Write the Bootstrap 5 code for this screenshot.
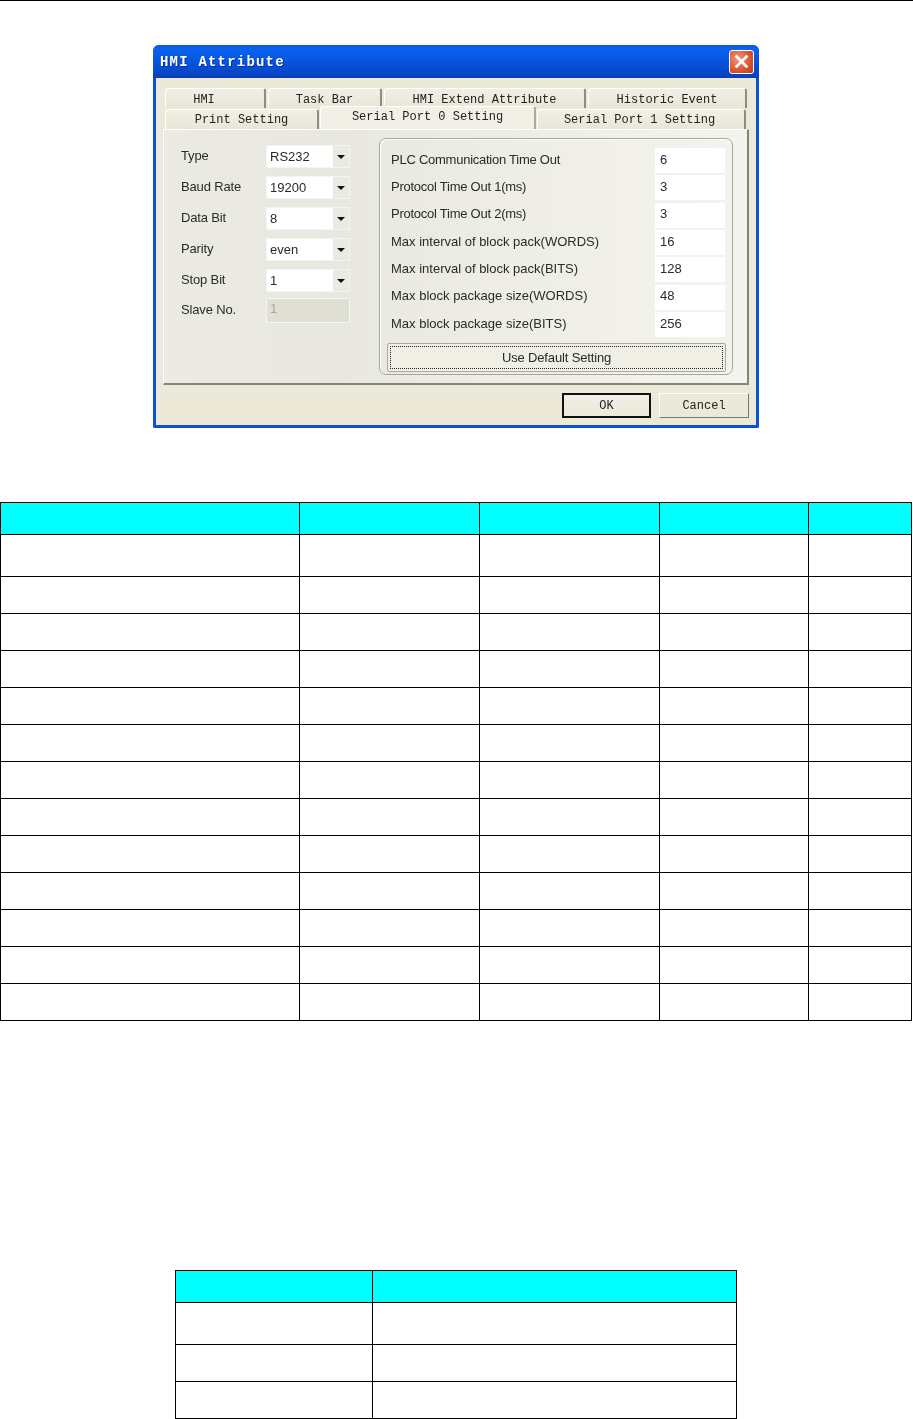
<!DOCTYPE html>
<html lang="en">
<head>
<meta charset="utf-8">
<title>HMI Attribute</title>
<link rel="stylesheet" href="https://cdn.jsdelivr.net/npm/bootstrap@5.3.0/dist/css/bootstrap.min.css">
<style>
html,body{background:#fff;margin:0;padding:0}
.page-rule{height:1px;background:#000}
.dlg{width:606px;height:383px;margin:44px 0 0 153px;border:3px solid #0a50d8;border-top:0;border-radius:6px 6px 2px 2px;background:#ece9d8;filter:blur(.3px);font-family:"Liberation Sans",Arial,sans-serif;font-size:13px;color:#2a2a2a}
.dlg-title{height:33px;margin:0 -3px;padding:1px 5px 0 7px;border-radius:6px 6px 0 0;background:linear-gradient(#0a56e0 0,#0b62f0 12%,#0553dc 55%,#0547c8 85%,#0a3fb4 100%);color:#fff;font:bold 14px "Liberation Mono",monospace;letter-spacing:1.2px;text-shadow:1px 1px 0 #0a2f90}
.dlg-close{width:25px;height:24px;margin-top:-1px;border:1px solid #fff;border-radius:3px;background:radial-gradient(circle at 35% 35%,#ee9a7c,#d8542c 60%,#bd3a14)}
.dlg-close svg{display:block}
.dlg-body{padding-top:10px}
.tabrow{padding-left:9px;font:12px "Liberation Mono",monospace;color:#222}
.tabrow-top{margin-bottom:1px;gap:2px}
.tabrow-top .xptab{padding-top:2px}
.tabrow-bottom{gap:1px}
.xptab{height:20px;border-top:1px solid #fff;border-left:1px solid #fff;border-right:2px solid #8d8d80;border-radius:3px 3px 0 0;background:linear-gradient(#f1efe4,#e9e6d8)}
.xptab-active{height:23px;margin-top:-3px;background:#f1efe6;border-right-color:#a9a99c;padding-bottom:2px;position:relative;z-index:1}
.tw-a{width:101px}.tabrow-top .tw-a{padding-right:22px}.tw-b{width:114px}.tw-c{width:202px}.tw-d{width:159px}
.tw-e{width:154px}.tw-f{width:216px}.tw-g{width:209px;padding-right:3px}
.tab-panel{width:586px;height:256px;margin-left:7px;border-left:1px solid #fff;border-top:1px solid #fff;border-right:2px solid #85857a;border-bottom:2px solid #85857a;background:linear-gradient(90deg,#ecebe3,#e9e8e0 30%,#f4f4ee)}
.left-col{width:215px;padding:15px 0 0 17px;gap:8px}
.field-row{height:23px}
.field-label{width:85px;margin-bottom:2px;letter-spacing:-.15px}
.combo{width:84px;height:23px;border:1px solid #f5f5f0;background:#fff;padding-left:3px}
.combo-btn{width:16px;align-self:stretch;background:#ebeae2;margin-left:auto}
.combo-arrow{width:0;height:0;border:4px solid transparent;border-top-color:#111;border-bottom:0}
.combo-off{height:25px;background:#e0dfd4;color:#aaa99c;border-color:#f7f7f2;padding-bottom:3px}
.field-row-off{height:25px;margin-top:-2px}
.grp{width:354px;height:237px;margin-top:8px;border:1px solid #a8a89a;border-radius:7px;padding:9px 7px 0 7px;box-shadow:inset 1px 1px 0 #fff}
.grp-rows{gap:2.33px;padding-left:4px}
.grp-row{height:25px;letter-spacing:-.25px}
.grp-row-wide{letter-spacing:0}
.grp-row>span{padding-bottom:2px}
.num-field{width:70px;height:25px;background:#fff;padding:0 0 2px 5px;letter-spacing:0}
.grp-btn{height:29px;margin-top:6px;margin-right:-1px;padding:2px;border:1px solid #aaa99c;border-radius:2px;background:#f0efe6;font:13px "Liberation Sans",Arial,sans-serif;letter-spacing:-.15px;color:#2a2a2a}
.grp-btn-in{height:100%;border:1px dotted #222}
.dlg-foot{margin-top:8px;padding-right:7px;gap:8px}
.xpbtn{width:90px;height:25px;padding:0;border-radius:0;background:#ece9d8;border:1px solid #fff;border-right-color:#77776c;border-bottom-color:#77776c;font:12px "Liberation Mono",monospace;color:#222}
.xpbtn-def{width:89px;border:2px solid #111;background:linear-gradient(#f0efe6,#ece9d8)}
.ruled{table-layout:fixed;border-collapse:collapse;margin-bottom:0}
.ruled>*>tr>*{padding:0;border:1px solid #000;background:#fff;box-shadow:none}
.ruled>thead>tr>*{background:#0ff}
.r-32{height:32px}.r-42{height:42px}.r-37{height:37px}
.ruled-wide{width:912px;margin-top:74px}
.ruled-small{width:561px;margin:0 0 0 175px}
.c-299{width:299px}.c-180{width:180px}.c-149{width:149px}.c-103{width:103px}
.c-197{width:197px}.c-364{width:364px}
.gap-tables{height:249px}
</style>
</head>
<body>
<div class="page-rule"></div>

<section class="dlg">
  <div class="dlg-title d-flex align-items-center justify-content-between">
    <span>HMI Attribute</span>
    <span class="dlg-close d-flex align-items-center justify-content-center">
      <svg width="15" height="15" viewBox="0 0 15 15" aria-hidden="true"><path d="M2.5 2.5 12.5 12.5M12.5 2.5 2.5 12.5" stroke="#fff" stroke-width="2.6" stroke-linecap="square" fill="none"/></svg>
    </span>
  </div>
  <div class="dlg-body">
    <div class="tabrow tabrow-top d-flex">
      <div class="xptab tw-a d-flex align-items-center justify-content-center">HMI</div>
      <div class="xptab tw-b d-flex align-items-center justify-content-center">Task Bar</div>
      <div class="xptab tw-c d-flex align-items-center justify-content-center">HMI Extend Attribute</div>
      <div class="xptab tw-d d-flex align-items-center justify-content-center">Historic Event</div>
    </div>
    <div class="tabrow tabrow-bottom d-flex">
      <div class="xptab tw-e d-flex align-items-center justify-content-center">Print Setting</div>
      <div class="xptab xptab-active tw-f d-flex align-items-center justify-content-center">Serial Port 0 Setting</div>
      <div class="xptab tw-g d-flex align-items-center justify-content-center">Serial Port 1 Setting</div>
    </div>
    <div class="tab-panel d-flex">
      <div class="left-col d-flex flex-column">
        <div class="field-row d-flex align-items-center"><span class="field-label">Type</span><div class="combo d-flex align-items-center">RS232<span class="combo-btn d-flex align-items-center justify-content-center"><i class="combo-arrow"></i></span></div></div>
        <div class="field-row d-flex align-items-center"><span class="field-label">Baud Rate</span><div class="combo d-flex align-items-center">19200<span class="combo-btn d-flex align-items-center justify-content-center"><i class="combo-arrow"></i></span></div></div>
        <div class="field-row d-flex align-items-center"><span class="field-label">Data Bit</span><div class="combo d-flex align-items-center">8<span class="combo-btn d-flex align-items-center justify-content-center"><i class="combo-arrow"></i></span></div></div>
        <div class="field-row d-flex align-items-center"><span class="field-label">Parity</span><div class="combo d-flex align-items-center">even<span class="combo-btn d-flex align-items-center justify-content-center"><i class="combo-arrow"></i></span></div></div>
        <div class="field-row d-flex align-items-center"><span class="field-label">Stop Bit</span><div class="combo d-flex align-items-center">1<span class="combo-btn d-flex align-items-center justify-content-center"><i class="combo-arrow"></i></span></div></div>
        <div class="field-row field-row-off d-flex align-items-center"><span class="field-label">Slave No.</span><div class="combo combo-off d-flex align-items-center">1</div></div>
      </div>
      <div class="grp d-flex flex-column">
        <div class="grp-rows d-flex flex-column">
          <div class="grp-row d-flex align-items-center justify-content-between"><span>PLC Communication Time Out</span><span class="num-field d-flex align-items-center">6</span></div>
          <div class="grp-row d-flex align-items-center justify-content-between"><span>Protocol Time Out 1(ms)</span><span class="num-field d-flex align-items-center">3</span></div>
          <div class="grp-row d-flex align-items-center justify-content-between"><span>Protocol Time Out 2(ms)</span><span class="num-field d-flex align-items-center">3</span></div>
          <div class="grp-row grp-row-wide d-flex align-items-center justify-content-between"><span>Max interval of block pack(WORDS)</span><span class="num-field d-flex align-items-center">16</span></div>
          <div class="grp-row grp-row-wide d-flex align-items-center justify-content-between"><span>Max interval of block pack(BITS)</span><span class="num-field d-flex align-items-center">128</span></div>
          <div class="grp-row grp-row-wide d-flex align-items-center justify-content-between"><span>Max block package size(WORDS)</span><span class="num-field d-flex align-items-center">48</span></div>
          <div class="grp-row grp-row-wide d-flex align-items-center justify-content-between"><span>Max block package size(BITS)</span><span class="num-field d-flex align-items-center">256</span></div>
        </div>
        <button type="button" class="grp-btn btn d-block"><span class="grp-btn-in d-flex align-items-center justify-content-center">Use Default Setting</span></button>
      </div>
    </div>
    <div class="dlg-foot d-flex justify-content-end">
      <button type="button" class="btn xpbtn xpbtn-def">OK</button>
      <button type="button" class="btn xpbtn">Cancel</button>
    </div>
  </div>
</section>

<table class="table ruled ruled-wide">
  <colgroup><col class="c-299"><col class="c-180"><col class="c-180"><col class="c-149"><col class="c-103"></colgroup>
  <thead><tr class="r-32"><th></th><th></th><th></th><th></th><th></th></tr></thead>
  <tbody>
    <tr class="r-42"><td></td><td></td><td></td><td></td><td></td></tr>
    <tr class="r-37"><td></td><td></td><td></td><td></td><td></td></tr>
    <tr class="r-37"><td></td><td></td><td></td><td></td><td></td></tr>
    <tr class="r-37"><td></td><td></td><td></td><td></td><td></td></tr>
    <tr class="r-37"><td></td><td></td><td></td><td></td><td></td></tr>
    <tr class="r-37"><td></td><td></td><td></td><td></td><td></td></tr>
    <tr class="r-37"><td></td><td></td><td></td><td></td><td></td></tr>
    <tr class="r-37"><td></td><td></td><td></td><td></td><td></td></tr>
    <tr class="r-37"><td></td><td></td><td></td><td></td><td></td></tr>
    <tr class="r-37"><td></td><td></td><td></td><td></td><td></td></tr>
    <tr class="r-37"><td></td><td></td><td></td><td></td><td></td></tr>
    <tr class="r-37"><td></td><td></td><td></td><td></td><td></td></tr>
    <tr class="r-37"><td></td><td></td><td></td><td></td><td></td></tr>
  </tbody>
</table>

<div class="gap-tables"></div>

<table class="table ruled ruled-small">
  <colgroup><col class="c-197"><col class="c-364"></colgroup>
  <thead><tr class="r-32"><th></th><th></th></tr></thead>
  <tbody>
    <tr class="r-42"><td></td><td></td></tr>
    <tr class="r-37"><td></td><td></td></tr>
    <tr class="r-37"><td></td><td></td></tr>
  </tbody>
</table>
<script src="https://cdn.jsdelivr.net/npm/bootstrap@5.3.0/dist/js/bootstrap.bundle.min.js"></script>
</body>
</html>
